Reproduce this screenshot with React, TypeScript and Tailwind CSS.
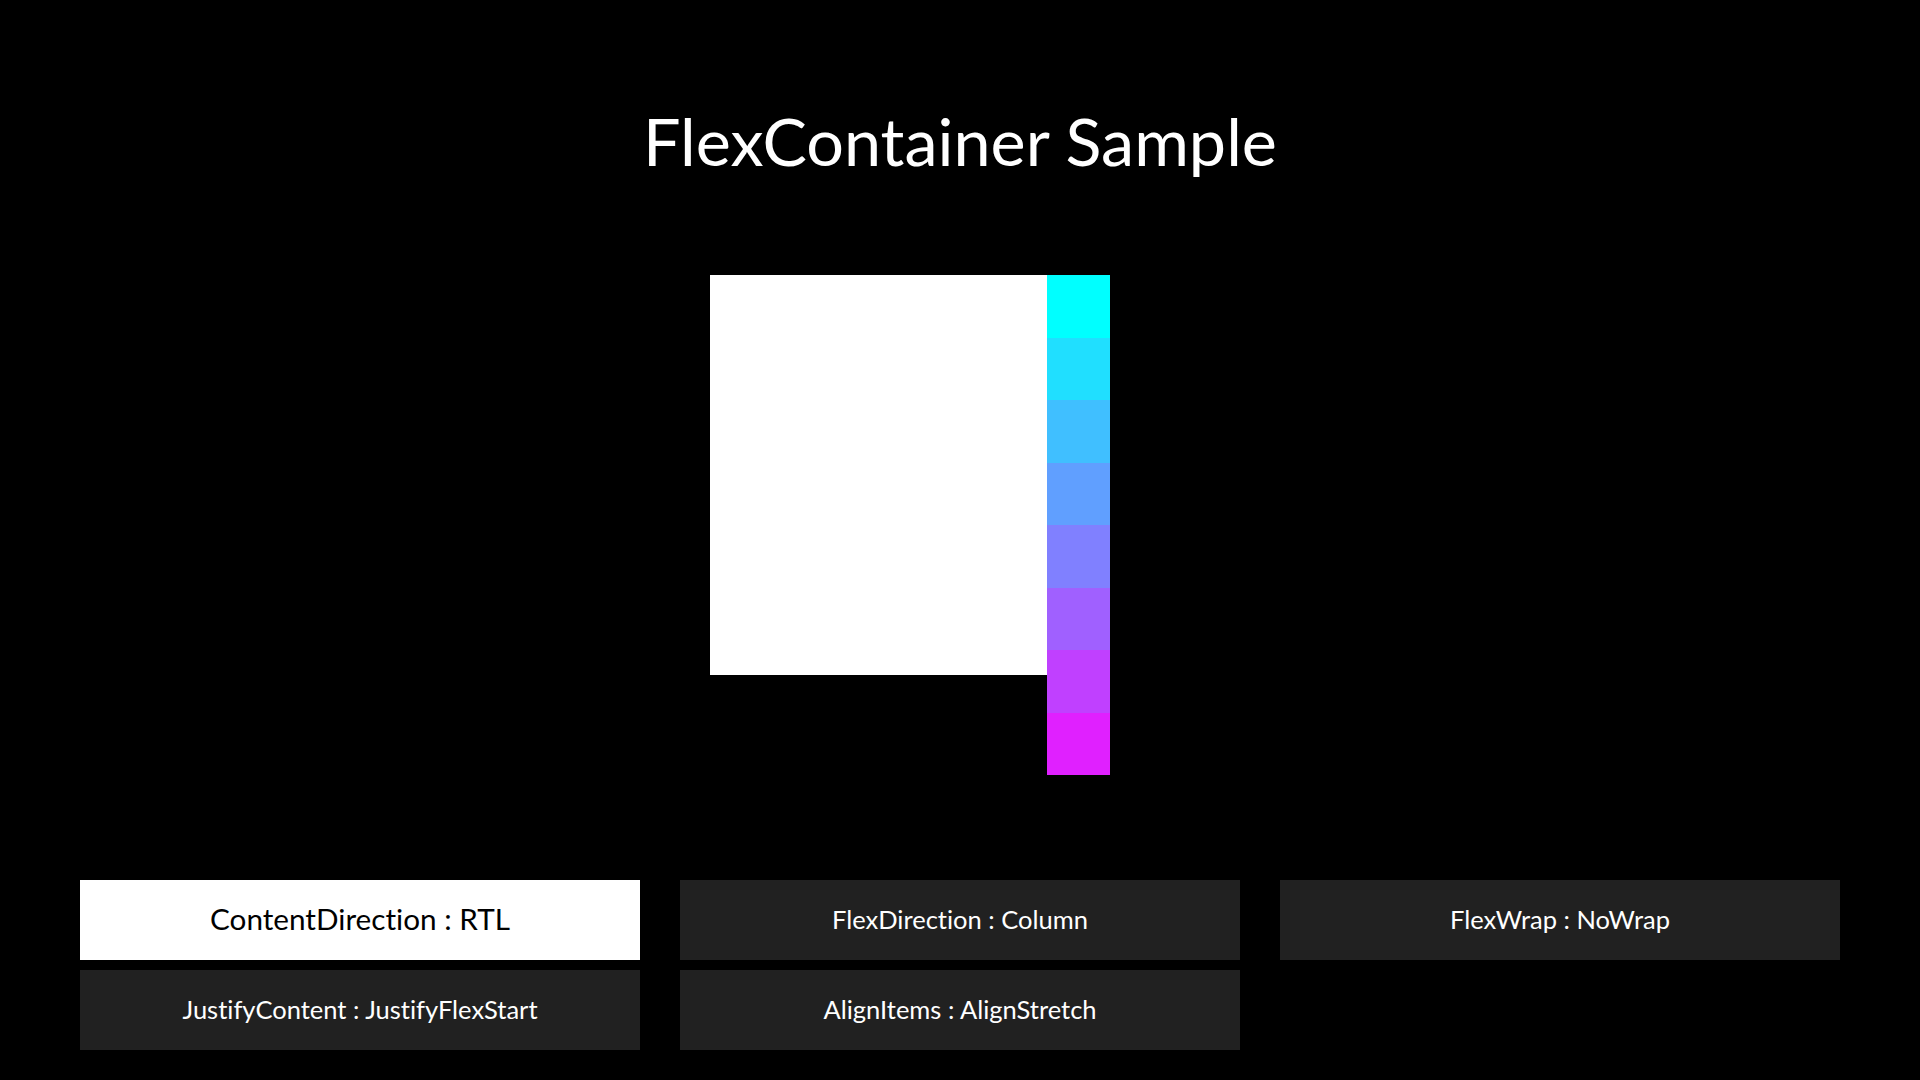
const bars = [
  "bg-[#00ffff]",
  "bg-[#20dfff]",
  "bg-[#40bfff]",
  "bg-[#609fff]",
  "bg-[#8080ff]",
  "bg-[#a060ff]",
  "bg-[#c040ff]",
  "bg-[#e020ff]",
];

interface OptionProps {
  label: string;
  selected?: boolean;
}

const Option: React.FC<OptionProps> = ({ label, selected }) => {
  return (
    <div
      className={
        selected
          ? "h-[80px] flex items-center justify-center bg-white text-black text-[29.7px] pb-[2px]"
          : "h-[80px] flex items-center justify-center bg-[#212121] text-white text-[25.5px] pb-[2px]"
      }
    >
      {label}
    </div>
  );
};

export default function App() {
  return (
    <div
      className="w-[1920px] h-[1080px] bg-black flex flex-col overflow-hidden [font-variant-ligatures:none]"
      style={{ fontFamily: "Lato, 'Open Sans', sans-serif" }}
    >
      <div className="h-[275px] flex justify-center pt-[95px]">
        <h1 className="text-white text-[66.5px] leading-[90px] font-normal">FlexContainer Sample</h1>
      </div>

      <div className="h-[605px] flex items-start pl-[710px]">
        <div className="w-[337px] h-[400px] bg-white" />
        <div className="flex flex-col w-[63px]">
          {bars.map((c, i) => (
            <div key={i} className={`h-[62.5px] ${c}`} />
          ))}
        </div>
      </div>

      <div className="grid grid-cols-[560px_560px_560px] gap-x-[40px] gap-y-[10px] pl-[80px]">
        <Option label="ContentDirection : RTL" selected />
        <Option label="FlexDirection : Column" />
        <Option label="FlexWrap : NoWrap" />
        <Option label="JustifyContent : JustifyFlexStart" />
        <Option label="AlignItems : AlignStretch" />
      </div>
    </div>
  );
}
